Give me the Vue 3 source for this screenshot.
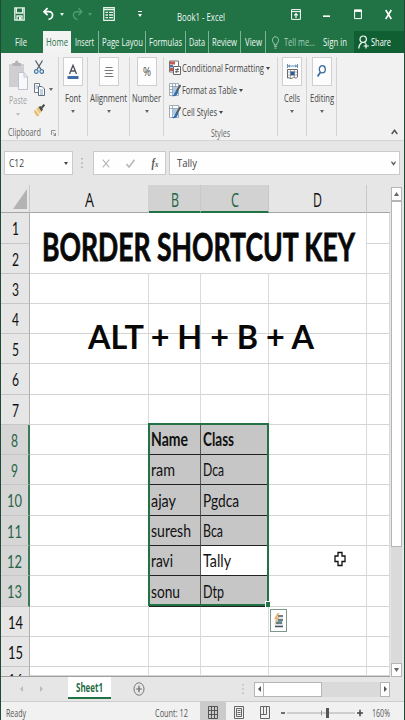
<script setup>
import { h } from 'vue'

// Condensed text label: drawn at a fixed width, caps centred on its box.
// Small labels are set slightly taller than their box so they stay narrow.
const Label = (p) => {
  const f = p.s < 12 ? p.s * 1.12 : p.s
  return h('svg', { width: p.w, height: p.s, style: { display: 'block', overflow: 'visible', flex: 'none' } }, [
    h('text', {
      x: 0,
      y: p.s * 0.5 + f * 0.36,
      textLength: p.w,
      lengthAdjust: 'spacingAndGlyphs',
      'font-size': f,
      'font-weight': p.b || 400,
      fill: 'currentColor'
    }, p.t)
  ])
}
Label.props = ['t', 'w', 's', 'b']

const Arrow = () =>
  h('svg', { width: 4, height: 3, viewBox: '0 0 4 3', style: { display: 'block', flex: 'none' } }, [
    h('path', { d: 'M0 0H4L2 3Z', fill: 'currentColor' })
  ])

const tabs = [
  { t: 'Insert', w: 19, box: 28 },
  { t: 'Page Layou', w: 41, box: 47 },
  { t: 'Formulas', w: 33, box: 40 },
  { t: 'Data', w: 16, box: 23 },
  { t: 'Review', w: 25, box: 32 },
  { t: 'View', w: 17, box: 25 }
]
const columns = [
  { t: 'A', w: 9 }, { t: 'B', w: 8, on: true }, { t: 'C', w: 8, on: true }, { t: 'D', w: 9 }, { t: '', w: 0 }
]
const data = {
  8: [['Name', 37], ['Class', 31]],
  9: [['ram', 24], ['Dca', 21]],
  10: [['ajay', 25], ['Pgdca', 36]],
  11: [['suresh', 40], ['Bca', 20]],
  12: [['ravi', 22], ['Tally', 28]],
  13: [['sonu', 29], ['Dtp', 21]]
}
const rows = Array.from({ length: 16 }, (_, i) => i + 1)
</script>

<template>
  <div class="win">
    <header class="title">
      <svg width="11" height="14" viewBox="0 0 11 14"><path d="M.8 .8H10.2V13.2H.8ZM2.4 1V6H8.6V1M3 13V9H8V13" fill="none" stroke="#e8f3ec" stroke-width="1.3" /><path d="M5 10h2v3H5z" fill="#e8f3ec" /></svg>
      <svg width="11" height="14" viewBox="0 0 11 14"><path d="M4.6 1.2L1 4.7L4.6 8.2M1.2 4.7H6C11 4.7 10.6 11.5 5.5 12.4" fill="none" stroke="#fff" stroke-width="1.7" /></svg>
      <Arrow class="dim1" />
      <svg width="11" height="14" viewBox="0 0 11 14"><path d="M6.4 1.2L10 4.7L6.4 8.2M9.8 4.7H5C0 4.7 .4 11.5 5.5 12.4" fill="none" stroke="#4f9b70" stroke-width="1.5" /></svg>
      <Arrow class="dim2" />
      <svg width="12" height="14" viewBox="0 0 12 14"><path d="M.7 .7H11.3V13.3H.7Z" fill="none" stroke="#e8f3ec" stroke-width="1.2" /><path d="M1 2.5H11M2.5 5.3H5M2.5 8H5M2.5 10.7H5M6 5.3H10M6 8H10M6 10.7H10" stroke="#e8f3ec" stroke-width="1.3" /></svg>
      <svg width="4" height="6" viewBox="0 0 4 6"><path d="M0 .5H4" stroke="#fff" /><path d="M0 3H4L2 6Z" fill="#fff" /></svg>
      <div class="name"><Label t="Book1 - Excel" :w="48" :s="9.5" /></div>
      <svg width="10" height="11" viewBox="0 0 10 11"><path d="M.6 .6H9.4V10.4H.6ZM.6 2.6H9.4" fill="none" stroke="#fff" /><path d="M5 9V5M3.2 6.4L5 4.5L6.8 6.4" fill="none" stroke="#fff" stroke-width="1.2" /></svg>
      <svg width="7" height="11" viewBox="0 0 7 11"><path d="M0 7.2H7" stroke="#fff" stroke-width="1.6" /></svg>
      <svg width="8" height="11" viewBox="0 0 8 11"><path d="M.6 1H7.4V9.6H.6Z" fill="none" stroke="#fff" /><path d="M0 1.8H8" stroke="#fff" stroke-width="2.2" /></svg>
      <svg width="7" height="11" viewBox="0 0 7 11"><path d="M.7 1L6.3 10M6.3 1L.7 10" stroke="#fff" stroke-width="1.6" /></svg>
    </header>

    <nav class="tabs">
      <div class="file"><Label t="File" :w="12" :s="9.5" /></div>
      <div class="home"><Label t="Home" :w="22" :s="9.5" /></div>
      <div v-for="t in tabs" :key="t.t" class="tab" :style="{ width: t.box + 'px' }"><Label :t="t.t" :w="t.w" :s="9.5" /></div>
      <div class="tell">
        <svg width="7" height="13" viewBox="0 0 7 13"><path d="M2.2 9V7.6C-.6 5.4 .2 .8 3.5 .8S7.6 5.4 4.8 7.6V9ZM2.2 10.6H4.8M2.6 12.2H4.4" fill="none" stroke="#a5cfb7" /></svg>
        <Label t="Tell me..." :w="31" :s="9.5" />
      </div>
      <Label class="sign" t="Sign in" :w="24" :s="9.5" />
      <div class="share">
        <svg width="11" height="14" viewBox="0 0 11 14"><circle cx="5.2" cy="4.2" r="3.2" fill="none" stroke="#fff" stroke-width="1.2" /><path d="M.8 13.5C.8 10 2.2 8.6 4 7.4M6.5 7.4L7.6 8.4M8 8.6V13.6M5.6 11H10.8" fill="none" stroke="#fff" stroke-width="1.2" /></svg>
        <Label t="Share" :w="20" :s="9.5" />
      </div>
    </nav>

    <section class="ribbon">
      <div class="clip">
        <div class="clip-top">
          <div class="paste">
            <svg width="19" height="31" viewBox="0 0 19 31"><path d="M0 4H15V27H0Z" fill="#cfcfd1" /><path d="M3.5 3H6C6-.3 9.500-.3 9.500 3H12V6H3.500Z" fill="#b4b4b8" /><path d="M9.500 12.500H15L18.500 17V29.500H9.500Z" fill="#f7f8fc" stroke="#bfc2cb" /><path d="M15 12.500V17H18.500" fill="none" stroke="#bfc2cb" /></svg>
            <Label t="Paste" :w="18" :s="9.5" />
            <Arrow class="pa" />
          </div>
          <div class="mini">
            <svg width="10" height="15" viewBox="0 0 10 15"><path d="M1.500 .5L7 9.500M8.500 .5L3 9.500" stroke="#56616d" stroke-width="1.300" /><circle cx="2.300" cy="11.500" r="1.800" fill="none" stroke="#3b76a8" stroke-width="1.200" /><circle cx="7.700" cy="11.500" r="1.800" fill="none" stroke="#3b76a8" stroke-width="1.200" /></svg>
            <div class="copy">
              <svg width="11" height="13" viewBox="0 0 11 13"><path d="M.5 .5H5.500V9.500H.5Z" fill="#fff" stroke="#6d7b88" /><path d="M4.500 3.500H8L10.500 6V12.500H4.500Z" fill="#fff" stroke="#5c6d7d" /><path d="M1.500 3H4M1.500 5H4M6 7H9M6 9H9M6 11H9" stroke="#7fa3c4" /></svg>
              <Arrow />
            </div>
            <svg width="11" height="13" viewBox="0 0 11 13"><path d="M1 5.500L5.500 11.500L3 12.500L0 8Z" fill="#e9bd68" /><path d="M2 4.800L5 2.800L8 7L5.500 10Z" fill="#edc77c" /><path d="M4.500 3L6.500 2L9 5.500L7.500 7.500Z" fill="#4a4a4a" /><path d="M7.500 4L10.300 .7" stroke="#4a4a4a" stroke-width="2" /></svg>
          </div>
        </div>
        <div class="clip-foot">
          <Label t="Clipboard" :w="33" :s="9" />
          <svg width="5" height="6" viewBox="0 0 5 6"><path d="M.5 5V.5H4.500M2 2.500L4.500 5.500M4.500 3V5.500H2.500" fill="none" stroke="#777" stroke-width=".8" /></svg>
        </div>
      </div>

      <div class="grp g-font">
        <div class="box"><svg width="12" height="16" viewBox="0 0 12 16"><path d="M2.500 10L6 1.300L9.500 10M3.800 7H8.200" fill="none" stroke="#4b4f55" stroke-width="1.300" /><path d="M.5 12H11.500V15H.5Z" fill="#3d6da3" /></svg></div>
        <Label t="Font" :w="16" :s="10" /><Arrow />
      </div>
      <div class="grp g-align">
        <div class="box"><svg width="10" height="12" viewBox="0 0 10 12"><path d="M1.500 1.500H8.500M.5 4.500H9.500M1.500 7.500H8.500M.5 10.500H9.500" stroke="#777" /></svg></div>
        <Label t="Alignment" :w="37" :s="10" /><Arrow />
      </div>
      <div class="grp g-num">
        <div class="box"><Label t="%" :w="8" :s="13" /></div>
        <Label t="Number" :w="29" :s="10" /><Arrow />
      </div>

      <div class="styles">
        <div class="st">
          <svg width="12" height="16" viewBox="0 0 12 16"><path d="M.5 1H9.500V12H.5Z" fill="#fff" stroke="#777" /><path d="M1 1.500H6V4.500H1ZM1 8H4V11H1Z" fill="#c65a50" /><path d="M1 5H4V7.500H1Z" fill="#4b77ae" /><path d="M4.500 6.500H11.500V14.500H4.500Z" fill="#fff" stroke="#666" /><path d="M6 9.500H10M6 11.700H10M9 8L7 13" stroke="#444" stroke-width=".8" /></svg>
          <Label t="Conditional Formatting" :w="82" :s="9.5" /><Arrow />
        </div>
        <div class="st">
          <svg width="12" height="16" viewBox="0 0 12 16"><path d="M.5 1.500H9.500V13.500H.5ZM.5 4.500H9.500M.5 7.500H9.500M.5 10.500H9.500M3.500 1.500V13.500M6.500 1.500V13.500" fill="#fff" stroke="#8b99a8" stroke-width=".8" /><path d="M4 5H9V12H4Z" fill="#a9c9e6" /><path d="M11.500 3L7.500 9.500" stroke="#555" stroke-width="1.800" /><path d="M8 8.500C5.500 9 6.500 12 3 14C7 15 9 12.500 9 9.500Z" fill="#2f6fad" /></svg>
          <Label t="Format as Table" :w="55" :s="9.5" /><Arrow />
        </div>
        <div class="st">
          <svg width="12" height="16" viewBox="0 0 12 16"><path d="M.5 1.500H9.500V13.500H.5ZM.5 4.500H9.500M3.500 1.500V13.500" fill="#fff" stroke="#8b99a8" stroke-width=".8" /><path d="M3.500 5H9V11H3.500Z" fill="#a9c9e6" /><path d="M11.500 3L7.500 9.500" stroke="#555" stroke-width="1.800" /><path d="M8 8.500C5.500 9 6.500 12 3 14C7 15 9 12.500 9 9.500Z" fill="#2f6fad" /></svg>
          <Label t="Cell Styles" :w="35" :s="9.5" /><Arrow />
        </div>
        <div class="st-foot"><Label t="Styles" :w="19" :s="9" /></div>
      </div>

      <div class="grp g-cells">
        <div class="box"><svg width="11" height="16" viewBox="0 0 11 16"><path d="M.5 0V4M10.500 0V4M1 2H10M3 .8L1.500 2L3 3.200M8 .8L9.500 2L8 3.200" fill="none" stroke="#3f77aa" stroke-width=".8" /><path d="M.5 5.500H10.500V13C8 15.500 7 12 5.500 14C3.500 15.500 2.500 13 .5 14Z" fill="#fff" stroke="#666" /><path d="M.5 8H10.500M.5 11H10.500M3.500 5.500V14M7.500 5.500V13.500" stroke="#888" stroke-width=".7" /><path d="M3.500 7.500H7.500V11.300H3.500Z" fill="#2d5d92" /></svg></div>
        <Label t="Cells" :w="16" :s="10" /><Arrow />
      </div>
      <div class="grp g-edit">
        <div class="box"><svg width="9" height="13" viewBox="0 0 9 13"><ellipse cx="5.300" cy="4.300" rx="3" ry="3.600" fill="none" stroke="#3a6c9c" stroke-width="1.300" /><path d="M3.400 7.200L.6 11.500" stroke="#3a6c9c" stroke-width="1.700" /></svg></div>
        <Label t="Editing" :w="24" :s="10" /><Arrow />
      </div>
      <div class="rest"><svg width="7" height="6" viewBox="0 0 7 6"><path d="M.7 5L3.500 1.300L6.300 5" fill="none" stroke="#555" stroke-width="1.500" /></svg></div>
    </section>

    <section class="fbar">
      <div class="nbox"><Label t="C12" :w="15" :s="9.5" /><Arrow /></div>
      <svg class="dots" width="2" height="10" viewBox="0 0 2 10"><path d="M1 0V10" stroke="#999" stroke-width="1.200" stroke-dasharray="1.500 2.700" /></svg>
      <div class="fx">
        <svg width="8" height="9" viewBox="0 0 8 9"><path d="M.7 .7L7.300 8.300M7.300 .7L.7 8.300" stroke="#b9b9b9" stroke-width="1.200" /></svg>
        <svg width="9" height="9" viewBox="0 0 9 9"><path d="M.5 5L3 8L8.500 .8" fill="none" stroke="#b9b9b9" stroke-width="1.600" /></svg>
        <span class="fn">f<small>x</small></span>
      </div>
      <div class="formula"><Label t="Tally" :w="20" :s="10" /><svg width="5" height="5" viewBox="0 0 5 5"><path d="M.5 .7L2.500 3.700L4.500 .7" fill="none" stroke="#555" stroke-width="1.200" /></svg></div>
    </section>

    <main class="area">
      <div class="sheet">
        <div class="corner"><svg width="14" height="20" viewBox="0 0 14 20"><path d="M14 0V20H0Z" fill="#b3b3b3" /></svg></div>
        <div v-for="c in columns" :key="c.t" class="ch" :class="{ on: c.on }"><Label v-if="c.t" :t="c.t" :w="c.w" :s="19.5" /></div>
        <template v-for="r in rows" :key="r">
          <div class="rh" :class="{ on: r > 7 && r < 14, cut: r === 16 }"><Label :t="String(r)" :w="r > 9 ? 15 : 7" :s="18" /></div>
          <div class="cell"></div>
          <template v-if="data[r]">
            <div v-for="(c, i) in data[r]" :key="i" class="cell sel" :class="{ active: c[0] === 'Tally', last: i === 1 }">
              <Label :t="c[0]" :w="c[1]" :s="18" :b="r === 8 ? 700 : 400" />
            </div>
          </template>
          <template v-else><div class="cell"></div><div class="cell"></div></template>
          <div class="cell"></div>
          <div class="cell"></div>
        </template>
        <div class="range"></div>
        <div class="banner"><Label t="BORDER SHORTCUT KEY" :w="313" :s="39" :b="700" /></div>
        <div class="keys"><Label t="ALT + H + B + A" :w="226" :s="32.5" :b="700" /></div>
        <div class="tag"><svg width="11" height="15" viewBox="0 0 11 15"><path d="M2 4H10V14H2Z" fill="#dfe6ea" /><path d="M5 3H10M5 7H10M3 10H9M2 13.500H10" stroke="#4a5560" stroke-width="1.500" /><path d="M4.500 8.500H9" stroke="#5aa39a" stroke-width="1.500" /><path d="M4.500 0L1 6H3.500L1 12L6.500 4.500H4L6.500 0Z" fill="#e6b36a" /></svg></div>
        <svg class="cursor" width="12" height="16" viewBox="0 0 12 16"><path d="M4 1.500H8V5H11V10.500H8V14.500H4V10.500H1V5H4Z" fill="#fff" stroke="#111" stroke-width="1.300" /></svg>
      </div>
      <div class="vscroll">
        <div class="vb"><svg width="5" height="4" viewBox="0 0 5 4"><path d="M0 4H5L2.500 0Z" fill="#666" /></svg></div>
        <div class="vt"></div>
        <div class="vr"></div>
        <div class="vb"><svg width="5" height="4" viewBox="0 0 5 4"><path d="M0 0H5L2.500 4Z" fill="#666" /></svg></div>
      </div>
    </main>

    <section class="sheets">
      <svg width="3" height="6" viewBox="0 0 3 6"><path d="M3 0V6L0 3Z" fill="#bcbcbc" /></svg>
      <svg width="3" height="6" viewBox="0 0 3 6"><path d="M0 0V6L3 3Z" fill="#bcbcbc" /></svg>
      <div class="stab"><Label t="Sheet1" :w="27" :s="10.5" :b="700" /></div>
      <svg width="12" height="14" viewBox="0 0 12 14"><ellipse cx="6" cy="7" rx="5" ry="6.200" fill="none" stroke="#777" /><path d="M6 3.800V10.200M3.200 7H8.800" stroke="#666" stroke-width="1.200" /></svg>
      <svg class="hd" width="2" height="10" viewBox="0 0 2 10"><path d="M1 0V10" stroke="#aaa" stroke-width="1.200" stroke-dasharray="1.500 2.700" /></svg>
      <div class="hscroll">
        <div class="hb"><svg width="3" height="6" viewBox="0 0 3 6"><path d="M3 0V6L0 3Z" fill="#555" /></svg></div>
        <div class="ht"></div>
        <div class="hr"></div>
        <div class="hb"><svg width="3" height="6" viewBox="0 0 3 6"><path d="M0 0V6L3 3Z" fill="#555" /></svg></div>
      </div>
    </section>

    <footer class="status">
      <Label t="Ready" :w="20" :s="9.5" />
      <Label class="count" t="Count: 12" :w="33" :s="9.5" />
      <div class="view on"><svg width="10" height="13" viewBox="0 0 10 13"><path d="M.5 .5H9.500V12.500H.5ZM.5 4.500H9.500M.5 8.500H9.500M3.500 .5V12.500M6.500 .5V12.500" fill="none" stroke="#555" /></svg></div>
      <div class="view"><svg width="10" height="13" viewBox="0 0 10 13"><path d="M.5 .5H9.500V12.500H.5ZM2.500 2.500H7.500V10.500H2.500Z" fill="none" stroke="#666" /><path d="M3.500 4.500H6.500M3.500 6.500H6.500M3.500 8.500H6.500" stroke="#666" /></svg></div>
      <div class="view"><svg width="10" height="13" viewBox="0 0 10 13"><path d="M.5 .5H9.500V12.500H.5ZM.5 8.500H6.500V.5M3.500 .5V8" fill="none" stroke="#666" /></svg></div>
      <svg class="zoom" width="82" height="12" viewBox="0 0 82 12"><path d="M0 6H4M76 6H82M79 2.800V9.200" stroke="#444" stroke-width="1.500" /><path d="M6 6H74" stroke="#aaa" /><path d="M40.500 3.500V8.500" stroke="#999" /><path d="M45 1H48V11H45Z" fill="#555" /></svg>
      <Label class="pct" t="160%" :w="18" :s="9.5" />
    </footer>
  </div>
</template>

<style>
body { margin: 0; background: #e6e6e6; }
</style>

<style scoped>
.win { position: relative; width: 405px; height: 720px; overflow: hidden; background: #e6e6e6; font-family: "Open Sans", "Noto Sans", sans-serif; color: #444; box-sizing: border-box; }
.win *, .win *::before { box-sizing: border-box; }
.win svg { display: block; flex: none; }
.win::after { content: ""; position: absolute; inset: 0; border-left: 1px solid #1f4a35; border-right: 1px solid #1f4a35; pointer-events: none; }

.title { display: grid; grid-template-columns: 29px 17px 12px 16px 15px 35px 39px 114px 32px 31px 31px 10px; align-items: center; height: 31px; padding: 0 0 3px 14px; background: #217346; color: #f0f7f3; }
.name { padding-top: 5px; }
.dim1 { color: #e0efe6; }
.dim2 { color: #4f9b70; }

.tabs { display: flex; align-items: stretch; height: 22px; background: #217346; color: #eff7f2; }
.tabs > * { align-items: center; }
.file { display: flex; width: 43px; padding-left: 15px; }
.home { display: flex; justify-content: center; width: 28px; background: #f3f3f3; color: #2c7450; }
.tab { display: flex; justify-content: center; border-right: 1px solid #7fb396; }
.tell { display: flex; gap: 5px; width: 57px; padding-left: 6px; color: #a5cfb7; }
.sign { align-self: center; margin-right: 7px; }
.share { display: flex; flex: 1; gap: 2px; padding-left: 4px; background: #0f5f33; color: #fff; }

.ribbon { display: flex; height: 88px; padding: 4px 0 0 2px; background: #f1f1f1; border-bottom: 1px solid #d5d5d5; }
.ribbon > * { height: 79px; border-right: 1px solid #d4d4d4; }
.clip { width: 57px; }
.clip-top { display: flex; height: 71px; }
.paste { width: 32px; padding: 3px 0 0 7px; color: #a2a2a2; display: flex; flex-direction: column; gap: 4px; }
.pa { margin: 4px 0 0 7px; color: #bdbdbd; }
.mini { display: flex; flex-direction: column; padding-top: 3px; gap: 8px; color: #666; }
.copy { display: flex; align-items: center; gap: 4px; }
.clip-foot { display: flex; align-items: center; gap: 10px; padding-left: 6px; color: #666; }
.grp { display: flex; flex-direction: column; align-items: center; color: #444; }
.grp > svg:last-child { margin-top: 7px; color: #666; }
.box { display: flex; align-items: center; justify-content: center; width: 20px; height: 29px; margin-bottom: 7px; background: #fdfdfd; border: 1px solid #cfcfcf; }
.g-font { width: 29px; }
.g-align { width: 42px; }
.g-num { width: 34px; }
.styles { width: 114px; padding-left: 5px; }
.st { display: flex; align-items: center; height: 22px; gap: 2px; }
.st > svg:first-child { margin-right: -1px; }
.st-foot { padding: 6px 0 0 42px; color: #666; }
.g-cells { width: 29px; }
.g-edit { width: 30px; }
.ribbon .rest { flex: 1; border: 0; display: flex; align-items: flex-end; justify-content: flex-end; padding: 0 7px 1px 0; }

.fbar { display: flex; align-items: flex-start; height: 44px; padding: 10px 5px 0 4px; }
.fbar > div { height: 24px; display: flex; align-items: center; background: #fefefe; border: 1px solid #cacaca; }
.nbox { width: 69px; justify-content: space-between; padding: 0 4px; }
.dots { margin: 7px 10px 0 8px; }
.fx { width: 73px; padding-left: 8px; gap: 16px; }
.fn { font: italic 700 12px "Liberation Serif", serif; transform: scaleX(.85); color: #555; }
.fn small { font-size: 8px; }
.formula { flex: 1; margin-left: 3px; justify-content: space-between; padding: 0 3px 0 7px; }

.area { display: flex; height: 492px; }
.sheet { position: relative; display: grid; width: 390px; padding-left: 1px; grid-template-columns: 29px 119px 52px 68px 98px 23px; grid-template-rows: 28px 31px 30px 30px 30px 30px 31px 30px 30px 30px 31px 30px 30px 31px 30px 30px 9px; border-bottom: 1px solid #a0a0a0; font-family: Lato, "Open Sans", sans-serif; background: #fff; color: #111; }
.corner, .ch { display: flex; align-items: center; justify-content: center; border-bottom: 1px solid #a5a5a5; border-right: 1px solid #c9c9c9; background: #e6e6e6; font-family: "Open Sans", sans-serif; }
.corner { justify-content: flex-end; padding-right: 2px; }
.ch { padding-top: 2px; }
.ch:nth-child(2) { border-right-color: #d2d2d2; }
.ch:nth-child(6) { border-right: 0; }
.ch.on { background: #d2d2d2; border-bottom: 2px solid #217346; color: #1f6544; padding-top: 3px; }
.rh { display: flex; align-items: center; justify-content: center; padding-top: 2px; border-right: 1px solid #b0b0b0; border-bottom: 1px solid #c6c6c6; background: #e6e6e6; overflow: hidden; }
.rh.on { background: #d6d6d6; border-right: 2px solid #3b7a58; color: #286448; }
.rh.cut { align-items: flex-start; padding-top: 5px; border-bottom: 0; }
.cell { border-right: 1px solid #dadada; border-bottom: 1px solid #d4d4d4; }
.sel { display: flex; align-items: center; padding: 1px 0 0 2px; background: #c6c6c6; border-right-color: #555; border-bottom-color: #222; }
.active { background: #fff; }
.range { position: absolute; left: 148px; top: 238px; width: 121px; height: 183px; border: 2px solid #217346; }
.range::after { content: ""; position: absolute; right: -3px; bottom: -3px; width: 4px; height: 5px; background: #217346; border: solid #fff; border-width: 1px 0 0 1px; }
.banner { position: absolute; left: 30px; top: 28px; width: 336px; height: 60px; padding: 14px 0 0 12px; background: #fff; color: #080808; stroke: #080808; stroke-width: .8px; }
.keys { position: absolute; left: 88px; top: 136px; color: #080808; }
.tag { position: absolute; left: 270px; top: 424px; display: flex; align-items: center; justify-content: center; width: 17px; height: 23px; background: #fff; border: 1px solid #7f978b; }
.cursor { position: absolute; left: 334px; top: 366px; }

.vscroll { display: flex; flex-direction: column; width: 11px; margin-left: 1px; padding-top: 2px; }
.vb { display: flex; align-items: center; justify-content: center; height: 14px; background: #fdfdfd; border: 1px solid #b5b5b5; }
.vt { height: 346px; background: #fff; border: 1px solid #b5b5b5; }
.vr { flex: 1; background: #dadada; }

.sheets { display: flex; align-items: center; height: 25px; padding-left: 20px; border-bottom: 1px solid #cdcdcd; }
.sheets > svg:first-child { margin-right: 17px; }
.stab { display: flex; align-items: center; justify-content: center; align-self: flex-start; width: 43px; height: 23px; margin: -1px 22px 0 25px; padding-top: 3px; background: #fff; border-bottom: 2px solid #217346; color: #1f6c45; }
.sheets .hd { margin-left: 97px; }
.hscroll { display: flex; width: 136px; height: 15px; margin-left: 10px; background: #dadada; }
.hb { display: flex; align-items: center; justify-content: center; width: 10px; background: #fdfdfd; border: 1px solid #b5b5b5; }
.ht { width: 58px; background: #fff; border: 1px solid #b5b5b5; border-left: 0; }
.hr { flex: 1; }

.status { display: flex; align-items: center; height: 18px; padding: 2px 0 0 6px; background: #f1f1f1; color: #555; }
.status > svg { margin-top: 1px; }
.count { margin-right: 12px; margin-left: 129px; }
.view { display: flex; align-items: center; justify-content: center; width: 26px; height: 18px; margin-top: -2px; padding-top: 3px; }
.view.on { background: #cbcbcb; }
.zoom { margin-left: 3px; }
.pct { margin-left: 9px; }
</style>
